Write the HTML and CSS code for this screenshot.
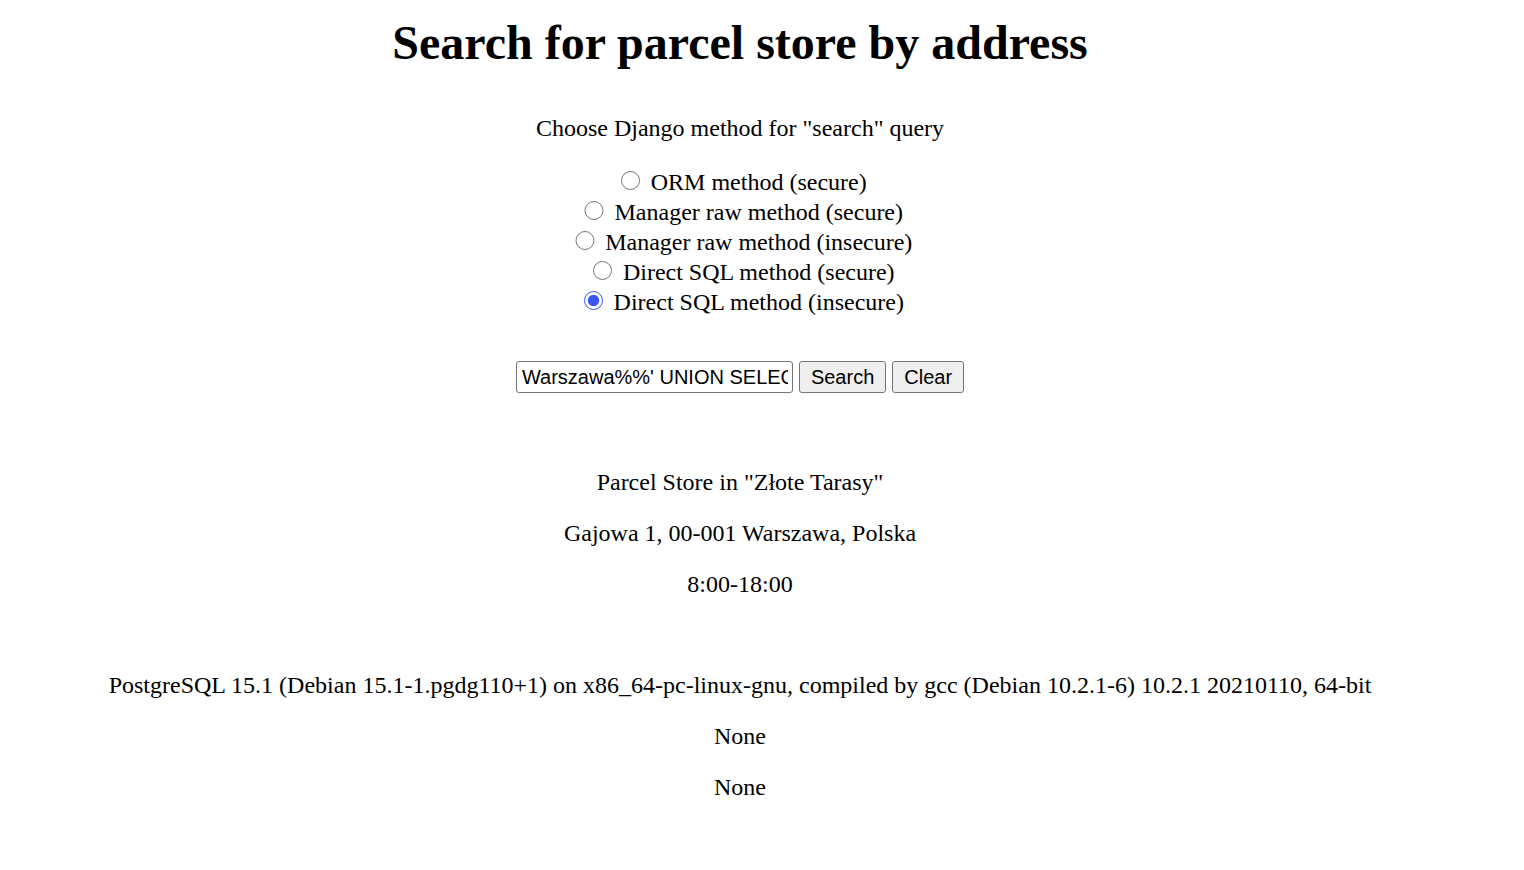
FILE: index.html
```html
<!DOCTYPE html>
<html lang="en">
<head>
<meta charset="utf-8">
<title>Search for parcel store</title>
<link rel="stylesheet" href="styles.css">
</head>
<body>
<main class="page">
  <h1 class="title">Search for parcel store by address</h1>
  <form class="search-form">
    <p class="prompt">Choose Django method for "search" query</p>
    <div class="options">
      <label class="option"><input type="radio" name="method" class="radio"> ORM method (secure)</label>
      <label class="option"><input type="radio" name="method" class="radio"> Manager raw method (secure)</label>
      <label class="option"><input type="radio" name="method" class="radio"> Manager raw method (insecure)</label>
      <label class="option"><input type="radio" name="method" class="radio"> Direct SQL method (secure)</label>
      <label class="option"><input type="radio" name="method" class="radio" checked> Direct SQL method (insecure)</label>
    </div>
    <div class="controls">
      <input type="text" class="field" value="Warszawa%%' UNION SELECT version(), NULL, NULL --">
      <button type="button" class="btn">Search</button>
      <button type="button" class="btn">Clear</button>
    </div>
  </form>
  <section class="results results-store">
    <p class="line">Parcel Store in "Złote Tarasy"</p>
    <p class="line">Gajowa 1, 00-001 Warszawa, Polska</p>
    <p class="line">8:00-18:00</p>
  </section>
  <section class="results results-db">
    <p class="line">PostgreSQL 15.1 (Debian 15.1-1.pgdg110+1) on x86_64-pc-linux-gnu, compiled by gcc (Debian 10.2.1-6) 10.2.1 20210110, 64-bit</p>
    <p class="line">None</p>
    <p class="line">None</p>
  </section>
</main>
</body>
</html>
```

FILE: styles.css
```css
html, body {
  margin: 0;
  padding: 0;
  background: #ffffff;
}
body {
  font-family: "Liberation Serif", "Times New Roman", serif;
  font-size: 24px;
  color: #000000;
}
.page {
  width: 1480px;
  text-align: center;
  padding-top: 15px;
}
.title {
  font-size: 48px;
  font-weight: bold;
  margin: 0 0 45px;
  line-height: 1.15;
}
.search-form {
  display: block;
}
.prompt {
  margin: 0 0 24px;
}
.options {
  display: flex;
  flex-direction: column;
  align-items: center;
}
.option {
  display: block;
  height: 30px;
  line-height: 30px;
}
.radio {
  width: 19.5px;
  height: 19.5px;
  margin: 4.5px 4.5px 0 7.5px;
  vertical-align: 0;
  accent-color: #3b55f5;
}
.controls {
  margin-top: 45px;
  display: flex;
  justify-content: center;
  align-items: center;
  gap: 6px;
}
.field {
  width: 277px;
  height: 32px;
  box-sizing: border-box;
  font-family: "Liberation Sans", Arial, sans-serif;
  font-size: 20px;
  padding: 1.5px 4px 1.5px 5px;
  border: 1.5px solid #767676;
  border-radius: 3px;
  color: #000;
}
.btn {
  height: 32px;
  box-sizing: border-box;
  font-family: "Liberation Sans", Arial, sans-serif;
  font-size: 20px;
  padding: 1.5px 11px;
  border: 1.5px solid #767676;
  border-radius: 3px;
  background: #efefef;
  color: #000;
}
.results-store {
  margin-top: 76px;
}
.results-db {
  margin-top: 74px;
}
.line {
  margin: 24px 0;
}
```
